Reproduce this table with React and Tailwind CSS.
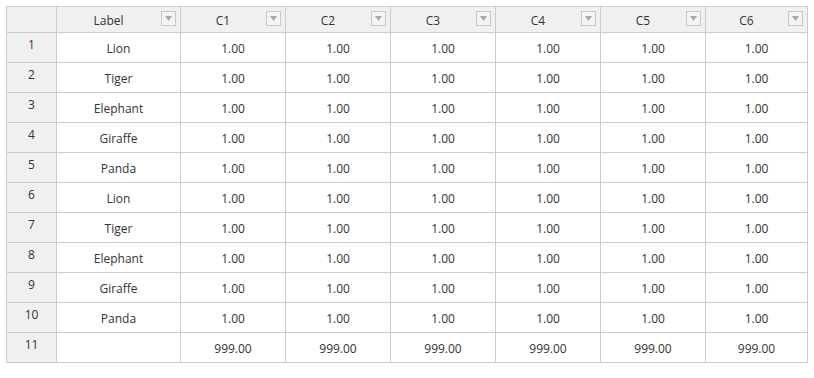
const COLS = ['Label', 'C1', 'C2', 'C3', 'C4', 'C5', 'C6']
const ANIMALS = ['Lion', 'Tiger', 'Elephant', 'Giraffe', 'Panda']

const rows = [
  ...Array.from({ length: 10 }, (_, i) => [ANIMALS[i % 5], '1.00', '1.00', '1.00', '1.00', '1.00', '1.00']),
  ['', '999.00', '999.00', '999.00', '999.00', '999.00', '999.00'],
]

function FilterButton() {
  return (
    <span className="absolute right-[4px] top-[4px] flex h-[15px] w-[15px] items-center justify-center border border-[#c8c8c8] bg-[#f4f4f4]">
      <svg width="7" height="5" viewBox="0 0 7 5">
        <path d="M0 0 H7 L3.5 5 Z" fill="#a8a8a8" />
      </svg>
    </span>
  )
}

export default function App() {
  return (
    <div className="p-[6px] text-[12px] text-[#333]" style={{ fontFamily: '"Open Sans", "Noto Sans", sans-serif' }}>
      <div className="grid w-fit grid-cols-[50px_124px_105px_105px_105px_105px_105px_102px] border-l border-t border-[#cccccc]">
        {/* header */}
        <div className="h-[26px] border-b border-r border-[#cccccc] bg-[#f0f0f0]" />
        {COLS.map((c) => (
          <div
            key={c}
            className="relative flex h-[26px] items-center justify-center border-b border-r border-[#cccccc] bg-[#f0f0f0] pr-[20px] pt-[2px]"
          >
            {c}
            <FilterButton />
          </div>
        ))}

        {/* body */}
        {rows.map((r, i) => (
          <div key={i} className="contents">
            <div className="h-[30px] border-b border-r border-[#cccccc] bg-[#f0f0f0] pt-[4px] text-center leading-4">
              {i + 1}
            </div>
            {r.map((v, j) => (
              <div key={j} className="flex h-[30px] items-center justify-center border-b border-r border-[#cccccc] bg-white pt-[2px]">
                {v}
              </div>
            ))}
          </div>
        ))}
      </div>
    </div>
  )
}
